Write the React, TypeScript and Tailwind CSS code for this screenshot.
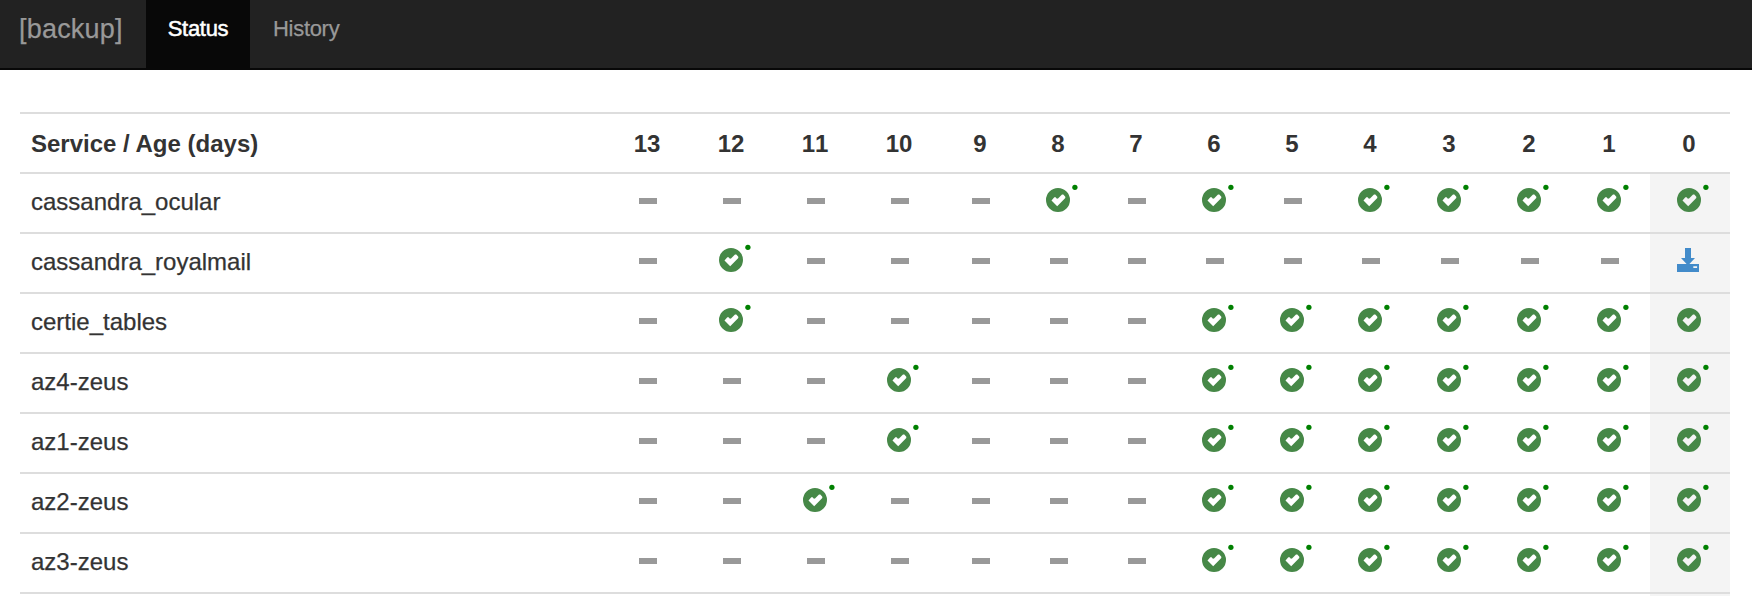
type Backup = "none" | "ok" | "ok-dot" | "running";

const columns = [
  { age: 13, width: "w-[84px]" },
  { age: 12, width: "w-[84px]" },
  { age: 11, width: "w-[84px]" },
  { age: 10, width: "w-[84px]" },
  { age: 9, width: "w-[78px]" },
  { age: 8, width: "w-[78px]" },
  { age: 7, width: "w-[78px]" },
  { age: 6, width: "w-[78px]" },
  { age: 5, width: "w-[78px]" },
  { age: 4, width: "w-[78px]" },
  { age: 3, width: "w-[80px]" },
  { age: 2, width: "w-[80px]" },
  { age: 1, width: "w-[80px]" },
  { age: 0, width: "w-[80px]" },
];

/* One character per day, oldest first: - none, o complete, O complete with marker, d running */
const services = [
  { name: "cassandra_ocular", days: "-----O-O-OOOOO" },
  { name: "cassandra_royalmail", days: "-O-----------d" },
  { name: "certie_tables", days: "-O-----OOOOOOo" },
  { name: "az4-zeus", days: "---O---OOOOOOO" },
  { name: "az1-zeus", days: "---O---OOOOOOO" },
  { name: "az2-zeus", days: "--O----OOOOOOO" },
  { name: "az3-zeus", days: "-------OOOOOOO" },
];

const kinds: Record<string, Backup> = { "-": "none", o: "ok", O: "ok-dot", d: "running" };

function CheckIcon() {
  return (
    <svg viewBox="0 0 24 24" className="block size-6 fill-[#468847]">
      <path
        fillRule="evenodd"
        d="M12 0a12 12 0 1 1 0 24a12 12 0 0 1 0-24z M5.5 12.4L8.3 9.3L9.6 9.3L10.9 10.7L12 10.5L16 6.6L17.3 6.6L19.3 8.8L19.3 10L11.2 18.3z"
      />
    </svg>
  );
}

function DownloadIcon() {
  return (
    <svg viewBox="0 0 22 24" className="block h-6 w-[22px] fill-[#428bca]">
      <path
        fillRule="evenodd"
        d="M8 0h6v10h4l-5.6 6H22v8H0v-8h9.6L4 10h4z M16.3 18.2h3.8v1.8h-3.8z"
      />
    </svg>
  );
}

function Mark({ kind }: { kind: Backup }) {
  if (kind === "none") {
    return <span className="mt-6 h-1.5 w-[18px] bg-[#999]" />;
  }
  if (kind === "running") {
    return (
      <span className="mt-3.5 mr-1">
        <DownloadIcon />
      </span>
    );
  }
  return (
    <span className="relative mt-3.5 mr-0.5">
      <CheckIcon />
      {kind === "ok-dot" && (
        <svg viewBox="0 0 6 6" className="absolute -top-[4px] left-[26px] size-1.5 fill-[#008000]">
          <circle cx="2.9" cy="3.3" r="2.65" />
        </svg>
      )}
    </span>
  );
}

export default function App() {
  return (
    <div className="h-[596px] overflow-hidden bg-white font-['Liberation_Sans',Arial,sans-serif] text-[#333]">
      <nav className="flex h-[70px] border-b-2 border-[#080808] bg-[#222] text-[#999]">
        <a className="w-[146px] pt-[10px] pl-[19px] text-[27px] leading-[38px] tracking-[0.2px] whitespace-nowrap [-webkit-text-stroke:0.25px_#999]">
          [backup]
        </a>
        <a className="w-[104px] bg-[#080808] pt-[10px] text-center text-[22px] leading-[38px] tracking-[-0.3px] text-white [-webkit-text-stroke:0.5px_white]">
          Status
        </a>
        <a className="pt-[10px] pl-[23px] text-[22px] leading-[38px] tracking-[-0.3px] [-webkit-text-stroke:0.25px_#999]">
          History
        </a>
      </nav>
      <main className="px-5 pt-[42px] pr-[22px]">
        <div className="flex h-[60px] border-t-2 border-[#ddd] text-2xl leading-[58px] font-bold">
          <div className="w-[586px] pt-px pl-[11px]">Service / Age (days)</div>
          {columns.map((c) => (
            <div key={c.age} className={`${c.width} pt-px pr-0.5 text-center [font-kerning:none]`}>
              {c.age}
            </div>
          ))}
        </div>
        {services.map((s) => (
          <div key={s.name} className="flex h-[60px] border-t-2 border-[#ddd] text-2xl leading-[56px]">
            <div className="w-[586px] pl-[11px] [-webkit-text-stroke:0.25px_#333]">{s.name}</div>
            {columns.map((c, i) => (
              <div
                key={c.age}
                className={`${c.width} flex items-start justify-center ${c.age === 0 ? "bg-[#f4f4f4]" : ""}`}
              >
                <Mark kind={kinds[s.days[i]]} />
              </div>
            ))}
          </div>
        ))}
        <div className="flex h-[60px] justify-end border-t-2 border-[#ddd]">
          <div className="w-20 bg-[#f4f4f4]" />
        </div>
      </main>
    </div>
  );
}
